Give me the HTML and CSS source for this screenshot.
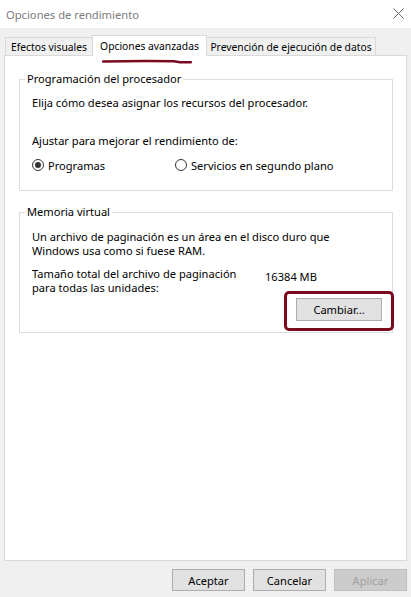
FILE: index.html
```html
<!DOCTYPE html>
<html lang="es">
<head>
<meta charset="utf-8">
<title>Opciones de rendimiento</title>
<link rel="stylesheet" href="styles.css">
</head>
<body>
<div class="window">
  <div class="titlebar">
    <span class="title">Opciones de rendimiento</span>
    <svg class="close" width="11" height="11" viewBox="0 0 11 11"><path d="M0.5 0.5 L10.5 10.5 M10.5 0.5 L0.5 10.5" stroke="#666" stroke-width="1" fill="none"/></svg>
  </div>
  <div class="main">
    <div class="tabs">
      <div class="tab tab-first">Efectos visuales</div>
      <div class="tab tab-active">Opciones avanzadas</div>
      <div class="tab tab-last">Prevención de ejecución de datos</div>
    </div>
    <div class="panel">
      <fieldset class="group group-cpu">
        <legend>Programación del procesador</legend>
        <div class="gb-body">
          <p class="line">Elija cómo desea asignar los recursos del procesador.</p>
          <p class="line adjust">Ajustar para mejorar el rendimiento de:</p>
          <div class="radios">
            <label class="radio radio-first"><span class="dot dot-on"></span>Programas</label>
            <label class="radio"><span class="dot"></span>Servicios en segundo plano</label>
          </div>
        </div>
      </fieldset>
      <fieldset class="group group-vm">
        <legend>Memoria virtual</legend>
        <div class="gb-body gb-body-vm">
          <p class="desc">Un archivo de paginación es un área en el disco duro que Windows usa como si fuese RAM.</p>
          <div class="size-row">
            <p class="size-label">Tamaño total del archivo de paginación para todas las unidades:</p>
            <span class="size-value">16384 MB</span>
          </div>
          <div class="change-row">
            <button class="btn btn-change">Cambiar...</button>
          </div>
        </div>
      </fieldset>
    </div>
    <div class="actions">
      <button class="btn btn-action">Aceptar</button>
      <button class="btn btn-action">Cancelar</button>
      <button class="btn btn-action btn-disabled">Aplicar</button>
    </div>
  </div>
  <svg class="annot-underline" width="92" height="8" viewBox="0 0 92 8">
    <path d="M1 2.5 C 20 2, 50 1.8, 72 2.2 L 78 3.2 C 82 3.4, 86 3.2, 89 3.3" stroke="#7a0a1e" stroke-width="2.4" stroke-linecap="round" fill="none"/>
  </svg>
  <div class="annot-box"></div>
</div>
</body>
</html>
```
FILE: styles.css
```css
* { box-sizing: border-box; }
html, body { margin: 0; padding: 0; }
body {
  width: 411px;
  height: 597px;
  overflow: hidden;
  font-family: "Noto Sans", "Open Sans", sans-serif;
  font-size: 11.1px;
  color: #000;
  background: #f0f0f0;
}
.window {
  position: relative;
  width: 411px;
  height: 597px;
  display: flex;
  flex-direction: column;
}
.titlebar {
  height: 28px;
  background: #fff;
  display: flex;
  align-items: center;
  justify-content: space-between;
  padding: 0 7px 0 6px;
}
.title {
  color: #7c7c7c;
  font-size: 11.2px;
}
.close { display: block; margin-top: -2px; }
.main {
  flex: 1;
  background: #f0f0f0;
  padding: 7px 4px 0 4px;
  display: flex;
  flex-direction: column;
}
.tabs {
  display: flex;
  align-items: flex-end;
  height: 20px;
  padding-left: 1px;
  position: relative;
  z-index: 1;
  font-size: 10.3px;
}
.tab {
  height: 18px;
  border: 1px solid #d9d9d9;
  border-bottom: none;
  background: #f0f0f0;
  display: flex;
  align-items: center;
  justify-content: center;
  white-space: nowrap;
  line-height: 16px;
}
.tab-first { width: 88px; }
.tab-active {
  width: 115px;
  height: 21px;
  margin-left: -1px;
  margin-bottom: -1px;
  background: #fff;
  position: relative;
  padding-bottom: 1px;
}
.tab-last { width: 170px; margin-left: -1px; }
.panel {
  height: 506px;
  border: 1px solid #d9d9d9;
  background: #fff;
  padding: 15px 13px 0 14px;
}
.group {
  margin: 0;
  padding: 0;
  min-width: 0;
  border: 1px solid #dcdcdc;
}
.group legend {
  margin-left: 5px;
  padding: 0 2px;
  line-height: 16px;
}
.gb-body { padding: 8px 12px 17px 12px; }
.line { margin: 0; line-height: 16px; white-space: nowrap; }
.adjust { margin-top: 22px; }
.radios {
  display: flex;
  margin-top: 8px;
  height: 16px;
  align-items: center;
}
.radio {
  display: flex;
  align-items: center;
  white-space: nowrap;
}
.radio-first { width: 143px; }
.dot {
  width: 12px;
  height: 12px;
  border: 1px solid #333;
  border-radius: 50%;
  margin-right: 4px;
  display: flex;
  align-items: center;
  justify-content: center;
  background: #fff;
}
.dot-on::after {
  content: "";
  width: 6px;
  height: 6px;
  border-radius: 50%;
  background: #333;
}
.group-vm { margin-top: 13px; }
.gb-body-vm { padding: 10px 10px 11px 12px; }
.desc { margin: 0; line-height: 14px; width: 306px; }
.size-row {
  display: flex;
  margin-top: 9px;
}
.size-label {
  margin: 0;
  width: 233px;
  padding-right: 18px;
  line-height: 14px;
}
.size-value {
  margin-top: 3px;
  line-height: 14px;
}
.change-row {
  display: flex;
  justify-content: flex-end;
  margin-top: 3px;
}
.btn {
  font-family: inherit;
  font-size: 11.1px;
  color: #000;
  background: #e1e1e1;
  border: 1px solid #adadad;
  padding: 0;
  margin: 0;
  display: flex;
  align-items: center;
  justify-content: center;
}
.btn-change { width: 86px; height: 23px; }
.actions {
  display: flex;
  justify-content: flex-end;
  gap: 8px;
  margin-top: 8px;
}
.btn-action { width: 73px; height: 22px; }
.btn-disabled {
  background: #cccccc;
  border-color: #bfbfbf;
  color: #a0a0a0;
}
.annot-underline {
  position: absolute;
  left: 102px;
  top: 59px;
}
.annot-box {
  position: absolute;
  left: 284px;
  top: 291px;
  width: 110px;
  height: 40px;
  border: 3px solid #7a0a1e;
  border-radius: 5px;
}
```
